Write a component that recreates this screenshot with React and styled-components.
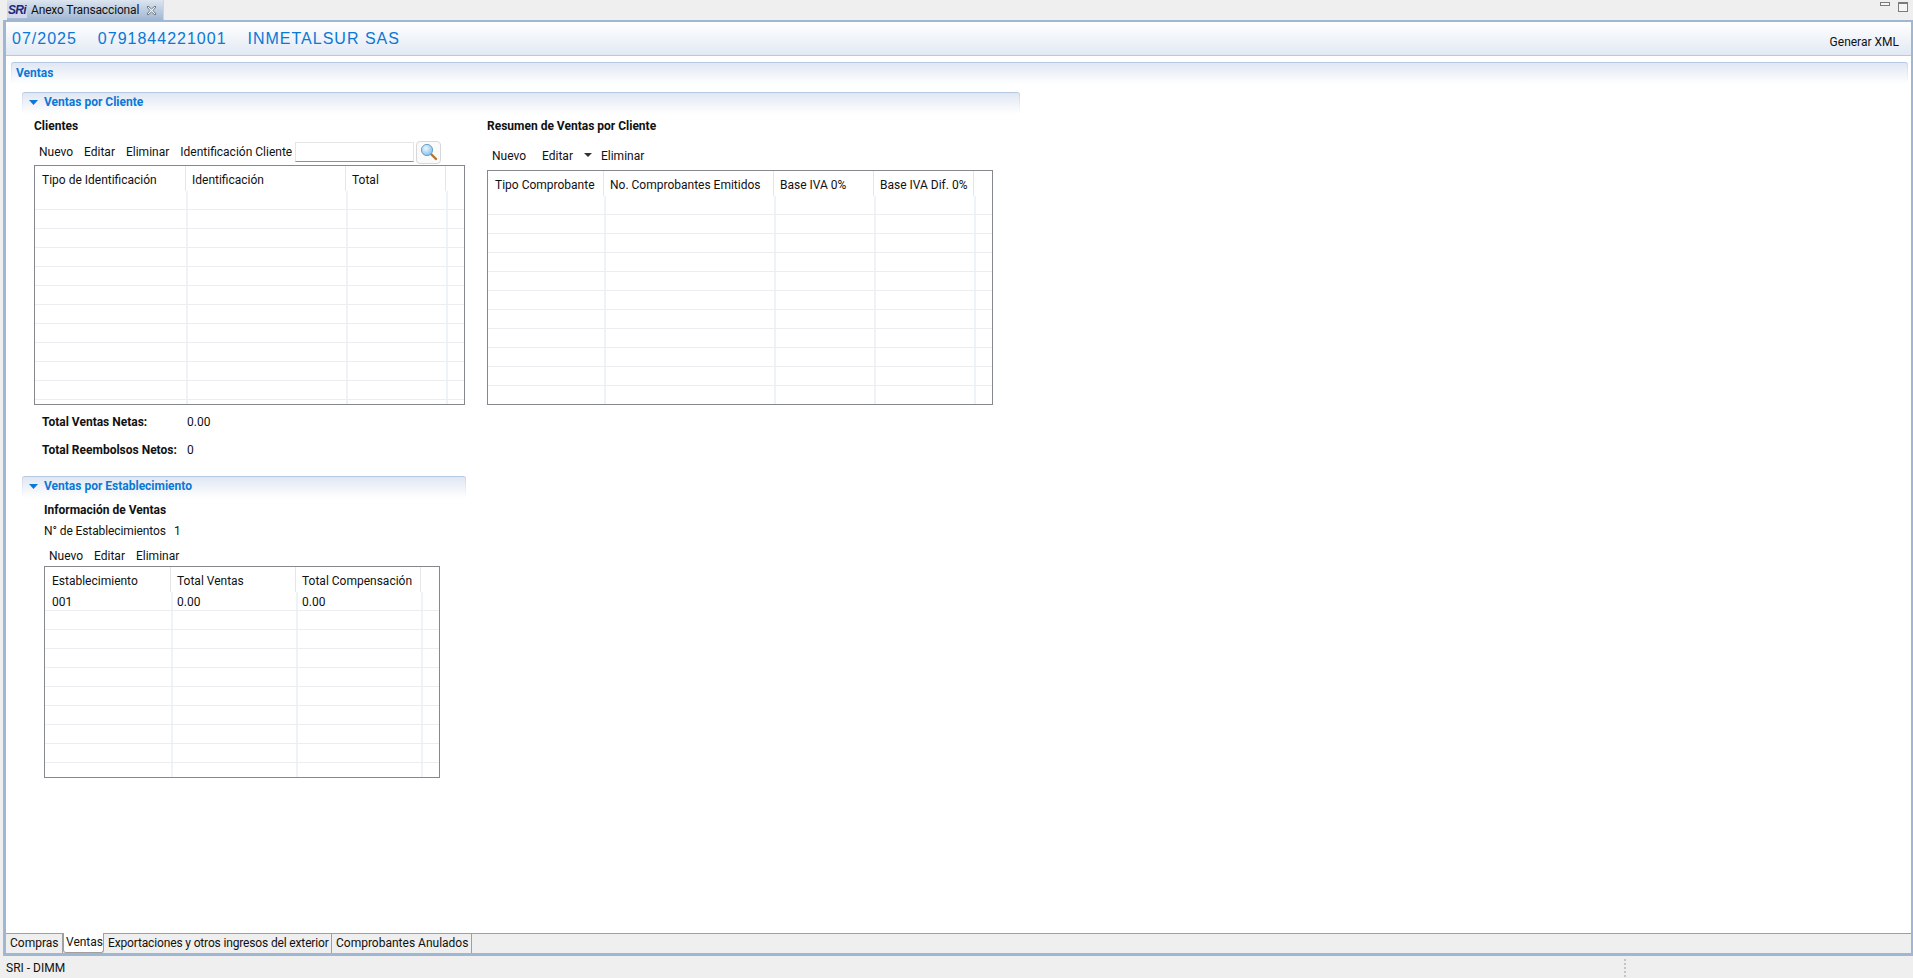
import React from 'react'
import styled, { createGlobalStyle } from 'styled-components'

const GlobalStyle = createGlobalStyle`
  html, body {
    margin: 0;
    padding: 0;
    background: #efefef;
  }
  body {
    font-family: Roboto, "Liberation Sans", sans-serif;
    font-size: 12px;
    color: #111;
  }
`

const clientColumns = [
  { title: 'Tipo de Identificación', width: 151 },
  { title: 'Identificación', width: 160 },
  { title: 'Total', width: 100 },
]

const summaryColumns = [
  { title: 'Tipo Comprobante', width: 116 },
  { title: 'No. Comprobantes Emitidos', width: 170 },
  { title: 'Base IVA 0%', width: 100 },
  { title: 'Base IVA Dif. 0%', width: 100 },
]

const storeColumns = [
  { title: 'Establecimiento', width: 126 },
  { title: 'Total Ventas', width: 125 },
  { title: 'Total Compensación', width: 125 },
]

function DataTable({ columns, rows, width, height }) {
  return (
    <Table $width={width} $height={height}>
      <HeaderRow>
        {columns.map(col => <HeaderCell key={col.title} $width={col.width}>{col.title}</HeaderCell>)}
      </HeaderRow>
      {rows.map((row, i) => (
        <BodyRow key={i}>
          {columns.map((col, j) => <BodyCell key={col.title} $width={col.width}>{row[j]}</BodyCell>)}
          <FillerCell />
        </BodyRow>
      ))}
    </Table>
  )
}

const emptyRows = n => Array.from({ length: n }, () => [])

const SriLogo = () => <Logo>SRi</Logo>

const CloseIcon = () => (
  <svg width="11" height="11" viewBox="0 0 11 11">
    <path d="M2 1 L5.5 4 L9 1 L10 2 L7 5.5 L10 9 L9 10 L5.5 7 L2 10 L1 9 L4 5.5 L1 2 Z" fill="#f4f6f9" stroke="#6f7883" strokeWidth="1" />
  </svg>
)

const SearchIcon = () => (
  <svg width="18" height="18" viewBox="0 0 18 18">
    <defs>
      <radialGradient id="lens" cx="40%" cy="35%" r="70%">
        <stop offset="0%" stopColor="#eef8ff" />
        <stop offset="100%" stopColor="#7dbdea" />
      </radialGradient>
    </defs>
    <path d="M11 11 L16 16" stroke="#b5762c" strokeWidth="2.4" strokeLinecap="round" />
    <circle cx="7" cy="7" r="5.6" fill="url(#lens)" stroke="#6c9fcc" strokeWidth="1" />
  </svg>
)

const SectionArrow = () => (
  <svg width="9" height="5" viewBox="0 0 9 5">
    <path d="M0 0 H9 L4.5 5 Z" fill="#0a78d6" />
  </svg>
)

export default function App() {
  return (
    <Page>
      <GlobalStyle />
      <TopBar>
        <ViewTab>
          <SriLogo />
          <ViewTabLabel>Anexo Transaccional</ViewTabLabel>
          <CloseIcon />
        </ViewTab>
        <WindowControls>
          <MinimizeBox />
          <MaximizeBox />
        </WindowControls>
      </TopBar>

      <Frame>
        <TitleBar>
          <TitleText>07/2025</TitleText>
          <TitleText>0791844221001</TitleText>
          <TitleText>INMETALSUR SAS</TitleText>
          <GenerateButton>Generar XML</GenerateButton>
        </TitleBar>

        <Body>
          <SectionHeader $plain>
            <SectionTitle>Ventas</SectionTitle>
          </SectionHeader>

          <Inner>
            <SectionHeader $width={998}>
              <SectionArrow />
              <SectionTitle>Ventas por Cliente</SectionTitle>
            </SectionHeader>

            <Columns>
              <LeftColumn>
                <GroupTitle>Clientes</GroupTitle>
                <Toolbar>
                  <Tool>Nuevo</Tool>
                  <Tool>Editar</Tool>
                  <Tool>Eliminar</Tool>
                  <Tool>Identificación Cliente</Tool>
                  <SearchInput />
                  <SearchButton><SearchIcon /></SearchButton>
                </Toolbar>
                <DataTable columns={clientColumns} rows={emptyRows(12)} width={431} height={240} />
                <TotalRow $top={9}>
                  <TotalLabel>Total Ventas Netas:</TotalLabel>
                  <span>0.00</span>
                </TotalRow>
                <TotalRow $top={12}>
                  <TotalLabel>Total Reembolsos Netos:</TotalLabel>
                  <span>0</span>
                </TotalRow>
              </LeftColumn>

              <RightColumn>
                <GroupTitle>Resumen de Ventas por Cliente</GroupTitle>
                <SummaryToolbar>
                  <Tool>Nuevo</Tool>
                  <Tool>Editar</Tool>
                  <DropArrow />
                  <Tool>Eliminar</Tool>
                </SummaryToolbar>
                <DataTable columns={summaryColumns} rows={emptyRows(11)} width={506} height={235} />
              </RightColumn>
            </Columns>

            <SectionHeader $width={444} $top={18}>
              <SectionArrow />
              <SectionTitle>Ventas por Establecimiento</SectionTitle>
            </SectionHeader>

            <StoreBlock>
              <GroupTitle>Información de Ventas</GroupTitle>
              <StoreCount>
                <StoreCountLabel>N° de Establecimientos</StoreCountLabel>
                <span>1</span>
              </StoreCount>
              <StoreToolbar>
                <Tool>Nuevo</Tool>
                <Tool>Editar</Tool>
                <Tool>Eliminar</Tool>
              </StoreToolbar>
              <DataTable
                columns={storeColumns}
                rows={[['001', '0.00', '0.00'], ...emptyRows(9)]}
                width={396}
                height={212}
              />
            </StoreBlock>
          </Inner>
        </Body>

        <FolderTabs>
          <FolderTab $width={57} $pad={4}>Compras</FolderTab>
          <FolderTab $width={41} $pad={2} $active>Ventas</FolderTab>
          <FolderTab $width={228} $pad={4} $tight>Exportaciones y otros ingresos del exterior</FolderTab>
          <FolderTab $width={140} $pad={4}>Comprobantes Anulados</FolderTab>
        </FolderTabs>
      </Frame>

      <StatusBar>
        <StatusText>SRI - DIMM</StatusText>
        <StatusGrip />
      </StatusBar>
    </Page>
  )
}

const Page = styled.div`
  display: flex;
  flex-direction: column;
  height: 978px;
  overflow: hidden;
`

const TopBar = styled.div`
  display: flex;
  justify-content: space-between;
  height: 20px;
  padding: 0 5px 0 7px;
  background: #efefef;
`

const ViewTab = styled.div`
  display: flex;
  align-items: center;
  width: 157px;
  height: 20px;
  box-sizing: border-box;
  border-right: 1px solid #c9d6e6;
  background: linear-gradient(#dce5f0, #9fb7d3);
`

const Logo = styled.span`
  display: block;
  width: 20px;
  height: 15px;
  margin-right: 4px;
  background: #d5d8ea;
  color: #1a2a7c;
  font-family: "Liberation Sans", sans-serif;
  font-size: 12px;
  font-weight: 700;
  font-style: italic;
  line-height: 15px;
  letter-spacing: -0.6px;
  text-align: center;
`

const ViewTabLabel = styled.span`
  width: 115px;
  letter-spacing: -0.15px;
  white-space: nowrap;
`

const WindowControls = styled.div`
  display: flex;
  align-items: flex-start;
  gap: 8px;
  padding-top: 2px;
`

const MinimizeBox = styled.div`
  width: 10px;
  height: 4px;
  box-sizing: border-box;
  border: 1px solid #7b7b7b;
  background: #f6f6f6;
`

const MaximizeBox = styled.div`
  width: 10px;
  height: 10px;
  box-sizing: border-box;
  border: 1px solid #7b7b7b;
  border-top-width: 2px;
  background: #f6f6f6;
`

const Frame = styled.div`
  flex: 1;
  display: flex;
  flex-direction: column;
  min-height: 0;
  margin-left: 3px;
  border: 3px solid #9fb7d3;
  border-top-width: 2px;
  border-right-width: 2px;
  background: #fff;
`

const TitleBar = styled.div`
  display: flex;
  align-items: center;
  gap: 21px;
  height: 32px;
  padding: 1px 12px 0 6px;
  border-bottom: 1px solid #b5c9e0;
  background: linear-gradient(#fff, #e2e9f4);
`

const TitleText = styled.span`
  color: #0a78d6;
  font-family: "Liberation Sans", sans-serif;
  font-size: 16px;
  letter-spacing: 1px;
  white-space: nowrap;
`

const GenerateButton = styled.span`
  margin-left: auto;
  padding-top: 6px;
  color: #111;
  white-space: nowrap;
`

const Body = styled.div`
  flex: 1;
  min-height: 0;
  padding: 6px 3px 0 5px;
`

const SectionHeader = styled.div`
  display: flex;
  align-items: center;
  gap: 6px;
  box-sizing: border-box;
  width: ${p => (p.$width ? `${p.$width}px` : 'auto')};
  height: 22px;
  margin-top: ${p => p.$top || 0}px;
  padding: 0 0 ${p => (p.$plain ? 1 : 3)}px ${p => (p.$plain ? 5 : 7)}px;
  border-top: 1px solid #b5c9e0;
  border-radius: 3px 3px 0 0;
  background:
    linear-gradient(#c8d7e8, #fff) left top / 1px 100% no-repeat,
    linear-gradient(#c8d7e8, #fff) right top / 1px 100% no-repeat,
    linear-gradient(#e0e7f3, #fff);
`

const SectionTitle = styled.span`
  color: #0a78d6;
  font-weight: 700;
  white-space: nowrap;
`

const Inner = styled.div`
  padding: 8px 0 0 11px;
`

const Columns = styled.div`
  display: flex;
`

const LeftColumn = styled.div`
  width: 453px;
  padding-left: 12px;
  padding-top: 4px;
`

const RightColumn = styled.div`
  padding-top: 4px;
`

const GroupTitle = styled.div`
  height: 16px;
  font-weight: 700;
  line-height: 16px;
  white-space: nowrap;
`

const Toolbar = styled.div`
  display: flex;
  align-items: center;
  gap: 11px;
  height: 24px;
  margin: 6px 0 1px;
  padding-left: 5px;
  white-space: nowrap;
`

const SummaryToolbar = styled(Toolbar)`
  gap: 16px;
  height: 16px;
  margin-top: 14px;
  margin-bottom: 6px;
`

const StoreToolbar = styled(Toolbar)`
  height: 16px;
  margin-top: 9px;
  margin-bottom: 2px;
`

const Tool = styled.span`
  line-height: 16px;
`

const DropArrow = styled.span`
  width: 0;
  height: 0;
  margin: 0 -7px 2px -5px;
  border: 4px solid transparent;
  border-top: 4px solid #333;
  border-bottom: 0;
`

const SearchInput = styled.div`
  width: 119px;
  height: 20px;
  box-sizing: border-box;
  margin-left: -8px;
  border: 1px solid #e6e6e6;
  border-bottom-color: #8a8f99;
  background: #fff;
`

const SearchButton = styled.div`
  display: flex;
  align-items: center;
  justify-content: center;
  width: 25px;
  height: 23px;
  box-sizing: border-box;
  margin-left: -9px;
  border: 1px solid #d8d8d8;
  border-radius: 4px;
  background: #fafafa;
`

const Table = styled.div`
  width: ${p => p.$width}px;
  height: ${p => p.$height}px;
  box-sizing: border-box;
  overflow: hidden;
  border: 1px solid #85898f;
  background: #fff;
`

const HeaderRow = styled.div`
  display: flex;
  height: 25px;
`

const HeaderCell = styled.div`
  width: ${p => p.$width}px;
  box-sizing: border-box;
  padding: 6px 0 0 6px;
  border-right: 1px solid #e6e6e6;
  line-height: 16px;
  white-space: nowrap;

  &:first-child {
    padding-left: 7px;
  }
`

const BodyRow = styled.div`
  display: flex;
  height: 19px;
  box-sizing: border-box;
  border-bottom: 1px solid #ebedf0;
`

const BodyCell = styled.div`
  width: ${p => p.$width}px;
  box-sizing: border-box;
  padding-left: 6px;
  box-shadow: 1px 0 0 #eef2f9, 2px 0 0 #eef2f9;
  line-height: 20px;
  white-space: nowrap;

  &:first-child {
    padding-left: 7px;
  }
`

const FillerCell = styled.div`
  flex: 1;
`

const TotalRow = styled.div`
  display: flex;
  height: 16px;
  margin-top: ${p => p.$top}px;
  padding-left: 8px;
  line-height: 16px;
`

const TotalLabel = styled.span`
  width: 145px;
  font-weight: 700;
  white-space: nowrap;
`

const StoreBlock = styled.div`
  padding: 4px 0 0 22px;
`

const StoreCount = styled.div`
  display: flex;
  height: 16px;
  margin-top: 5px;
  line-height: 16px;
`

const StoreCountLabel = styled.span`
  width: 130px;
  letter-spacing: -0.1px;
  white-space: nowrap;
`

const FolderTabs = styled.div`
  display: flex;
  height: 20px;
  box-sizing: border-box;
  border-top: 1px solid #a0a0a0;
  background: #efefef;
`

const FolderTab = styled.div`
  width: ${p => p.$width}px;
  box-sizing: border-box;
  height: ${p => (p.$active ? 20 : 19)}px;
  margin-top: ${p => (p.$active ? -1 : 0)}px;
  padding-left: ${p => p.$pad}px;
  border-right: 1px solid #a0a0a0;
  border-bottom: ${p => (p.$active ? '1px solid #a0a0a0' : 'none')};
  border-left: ${p => (p.$active ? '1px solid #a0a0a0' : 'none')};
  border-radius: ${p => (p.$active ? '0 0 3px 3px' : '0')};
  background: ${p => (p.$active ? '#fff' : 'transparent')};
  letter-spacing: ${p => (p.$tight ? '-0.15px' : 'normal')};
  line-height: 18px;
  white-space: nowrap;
`

const StatusBar = styled.div`
  display: flex;
  justify-content: space-between;
  height: 22px;
  padding-left: 6px;
  background: #efefef;
`

const StatusText = styled.span`
  padding-top: 4px;
  line-height: 16px;
`

const StatusGrip = styled.div`
  width: 2px;
  height: 18px;
  margin: 3px 287px 0 0;
  background: repeating-linear-gradient(#c4c4c4 0 2px, transparent 2px 4px);
`
